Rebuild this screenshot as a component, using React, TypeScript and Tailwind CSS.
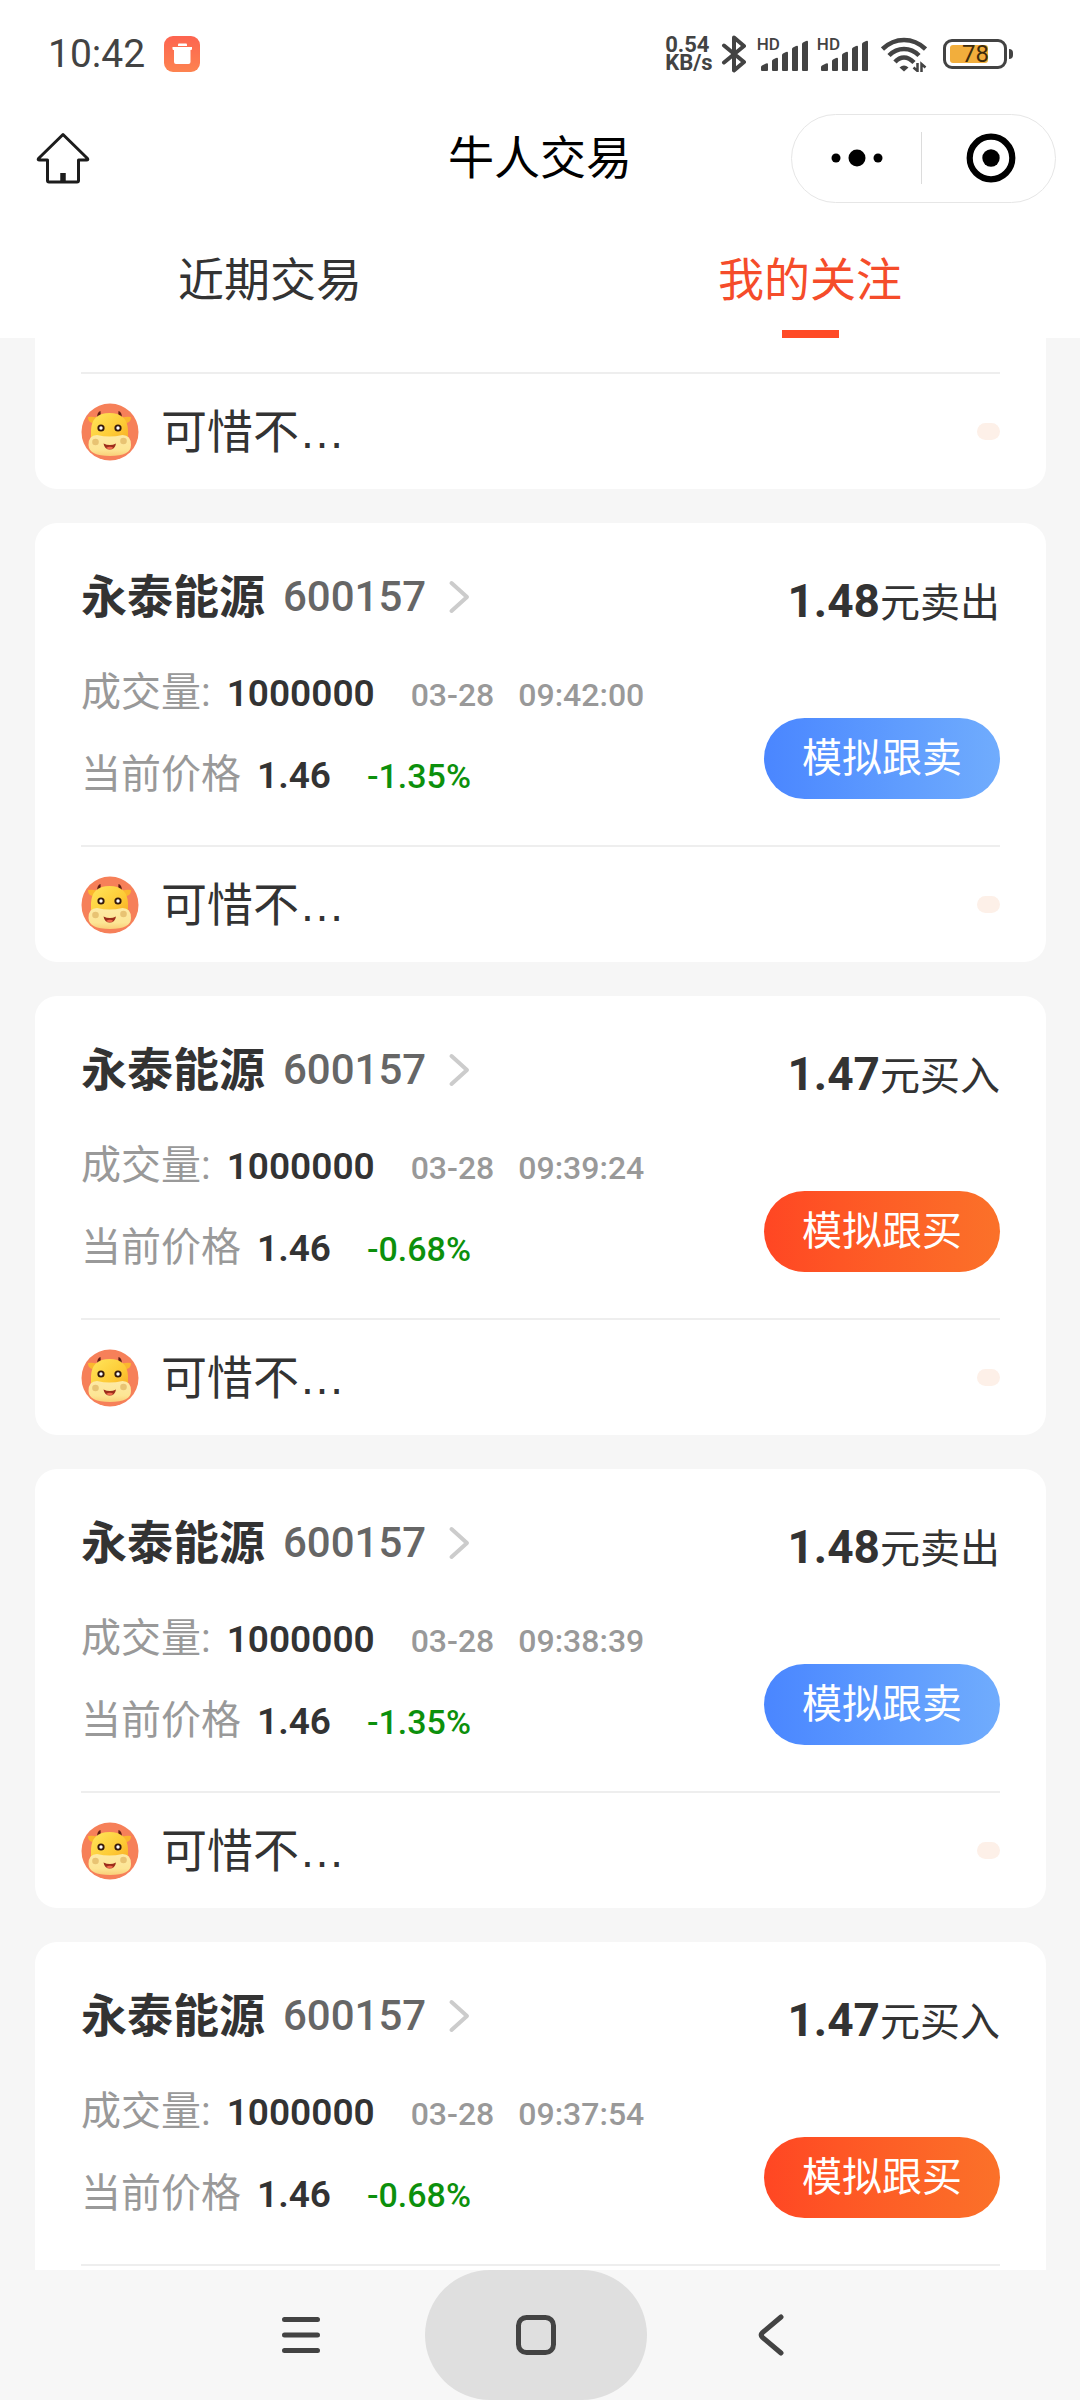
import React, { useState } from "react";

import clsx from "clsx";

type TYTrade = {
  id: number;
  name: string;
  code: string;
  action: "buy" | "sell";
  dealPrice: string;
  volume: string;
  date: string;
  time: string;
  price: string;
  change: string;
  user: string;
};

const stock = {
  name: "永泰能源",
  code: "600157",
  volume: "1000000",
  date: "03-28",
  price: "1.46",
  user: "可惜不…",
};

const trades: TYTrade[] = [
  { ...stock, id: 1, action: "sell", dealPrice: "1.48", time: "09:42:00", change: "-1.35%" },
  { ...stock, id: 2, action: "buy", dealPrice: "1.47", time: "09:39:24", change: "-0.68%" },
  { ...stock, id: 3, action: "sell", dealPrice: "1.48", time: "09:38:39", change: "-1.35%" },
  { ...stock, id: 4, action: "buy", dealPrice: "1.47", time: "09:37:54", change: "-0.68%" },
];

const Signal = () => (
  <div className="flex h-9 items-start">
    <span className="-mr-[17px] text-[17px] font-medium leading-4">HD</span>
    <svg viewBox="0 0 50 36" className="-ml-1 h-9 w-[50px]" fill="currentColor">
      <path d="M2 34v-3q0-1 1-1.500l4-2q2-1 2 1v5.500q0 1-1 1H3q-1 0-1-1z" />
      <path d="M13 34V25q0-1 1-1.500l3-1.500q2-1 2 1v11q0 1-1 1h-4q-1 0-1-1z" />
      <path d="M23 34V19q0-1 1-1.500l3-1.500q2-1 2 1v17q0 1-1 1h-4q-1 0-1-1z" />
      <path d="M33 34V13q0-1 1-1.500l3-1.500q2-1 2 1v23q0 1-1 1h-4q-1 0-1-1z" />
      <path d="M43 34V8q0-1 1-1.500l3-1.500q2-1 2 1v28q0 1-1 1h-4q-1 0-1-1z" />
    </svg>
  </div>
);

const StatusBar = () => (
  <div className="flex h-[108px] items-center justify-between pl-12 pr-[67px] text-[#434343]">
    <div className="flex items-center gap-[19px]">
      <span className="text-[39px] leading-none">10:42</span>
      <svg viewBox="0 0 36 36" className="size-9">
        <defs>
          <linearGradient id="trash" x1="0" y1="0" x2="0" y2="1">
            <stop offset="0" stopColor="#fd6450" />
            <stop offset="1" stopColor="#fd8350" />
          </linearGradient>
        </defs>
        <rect width="36" height="36" rx="9" fill="url(#trash)" />
        <path d="M14 8.500q0-1 1-1h7q1 0 1 1V10h-9z" fill="#fff" />
        <path d="M8.500 11h19.500v2q0 1-1 1h-.5v12q0 2-2 2h-12.500q-2 0-2-2V14h-.5q-1 0-1-1z" fill="#fff" />
      </svg>
    </div>

    <div className="flex items-center">
      <div className="flex flex-col text-[22px] font-bold leading-[18px]">
        <span>0.54</span>
        <span>KB/s</span>
      </div>

      <svg
        viewBox="0 0 26 38"
        className="ml-2 h-[38px] w-[26px]"
        fill="none"
        stroke="currentColor"
        strokeWidth="4"
        strokeLinecap="round"
        strokeLinejoin="round"
      >
        <path d="M3 10.500 23 27l-10 8.500V2.500L23 11 3 27.500" />
      </svg>

      <div className="ml-2.5 flex gap-2">
        <Signal />
        <Signal />
      </div>

      <svg
        viewBox="0 0 46 36"
        className="ml-3 h-9 w-[46px]"
        fill="none"
        stroke="currentColor"
        strokeWidth="4.500"
      >
        <path d="M1.500 13Q11 4 23 4t21.500 9" />
        <path d="M8 19.500Q14.500 13 23 13t15 6.500" />
        <path d="M14 26q4-4.500 9-4.500t10 5" />
        <path d="M18.500 31.500q4.500-4 9 0l-4.500 4z" fill="currentColor" stroke="none" />
        <path d="M36.500 27v8l-4-3.500M40.500 36v-8l4 3.500" strokeWidth="2.500" />
      </svg>

      <div className="ml-4 flex items-center gap-0.5">
        <div className="relative h-[30px] w-16 rounded-[9px] border-[3px] border-current">
          <div className="absolute left-1 top-[3px] h-[18px] w-[38px] rounded-[3px] bg-[#f2ae3c]" />
          <span className="absolute left-4 top-[3px] text-[24px] leading-[18px] text-[#3d2b0d]">
            78
          </span>
        </div>
        <div className="h-[10px] w-1 rounded-r-sm bg-current" />
      </div>
    </div>
  </div>
);

const NavBar = () => (
  <div className="grid h-[100px] grid-cols-3 items-center px-6">
    <a href="#home" aria-label="首页" className="w-fit pl-3">
      <svg
        viewBox="0 0 54 52"
        className="h-[52px] w-[54px]"
        fill="none"
        stroke="#1c1c1c"
        strokeWidth="3"
        strokeLinejoin="round"
      >
        <path d="M27 2.500 2.500 26.500q-1 1.500 1 1.500h8v20.500q0 1.500 1.500 1.500h28q1.500 0 1.500-1.500V28h8q2 0 1-1.500z" />
        <path d="M27 41v9" strokeWidth="5.500" />
      </svg>
    </a>

    <h1 className="text-center text-[46px] leading-[64px] text-black">牛人交易</h1>

    <div className="flex h-[89px] w-[265px] items-center justify-self-end rounded-full border border-[#e6e6e6]">
      <button type="button" aria-label="更多" className="flex flex-1 justify-center">
        <svg viewBox="0 0 54 20" className="h-5 w-[54px]">
          <circle cx="6" cy="10" r="4.500" />
          <circle cx="27" cy="10" r="8.500" />
          <circle cx="48" cy="10" r="4.500" />
        </svg>
      </button>
      <div className="h-[52px] w-px bg-[#dcdcdc]" />
      <button type="button" aria-label="关闭" className="flex flex-1 justify-center pl-1">
        <svg viewBox="0 0 50 50" className="size-[50px]">
          <circle cx="25" cy="25" r="21.300" fill="none" stroke="#000" strokeWidth="6.200" />
          <circle cx="25" cy="25" r="8.700" />
        </svg>
      </button>
    </div>
  </div>
);

const CowAvatar = () => (
  <svg viewBox="0 0 58 58" className="size-[58px]">
    <defs>
      <linearGradient id="cowHead" x1="0" y1="0" x2="1" y2="1">
        <stop offset="0" stopColor="#ffe65c" />
        <stop offset="0.600" stopColor="#fdca35" />
        <stop offset="1" stopColor="#f7a823" />
      </linearGradient>
      <linearGradient id="cowMuzzle" x1="0" y1="0" x2="0" y2="1">
        <stop offset="0" stopColor="#fdeaa6" />
        <stop offset="0.700" stopColor="#fde594" />
        <stop offset="1" stopColor="#f9cf78" />
      </linearGradient>
    </defs>
    <circle cx="29" cy="29" r="28.500" fill="#f68059" />
    <path d="M7 14q5-1 9 1l-3 5q-6 0-6-6zM50 14q-5-1-9 1l3 5q6 0 6-6z" fill="#fbb72e" />
    <path d="M16 15q0-6 3.500-7 1 3-1 7zM41 15q0-6-3.500-7-1 3 1 7z" fill="#5d1d14" />
    <path d="M10 36V27Q11 10 28.500 10T47 27v9q0 6-18.500 6T10 36z" fill="url(#cowHead)" />
    <path
      d="M7.500 42q0-10 8.500-10 6.500 1.500 12.500 1.500T41.500 32q8.500 0 8.500 10 0 11-21 11T7.500 42z"
      fill="url(#cowMuzzle)"
    />
    <circle cx="14.500" cy="39" r="3.300" fill="#e8c373" />
    <circle cx="42.500" cy="38" r="3.300" fill="#e8c373" />
    <circle cx="20" cy="25" r="3.600" fill="#34190c" />
    <circle cx="37" cy="25" r="3.600" fill="#34190c" />
    <circle cx="20" cy="25" r="1.700" fill="#fff" />
    <circle cx="37" cy="25" r="1.700" fill="#fff" />
    <path d="M22.500 40.500q6.500 3 12.500 0-1 6-6.200 6t-6.300-6z" fill="#9c2d1b" />
    <path d="M25 45q4-2.500 7.500 0-4 2.500-7.500 0z" fill="#f06a4c" />
  </svg>
);

const CardFooter = ({ user }: { user: string }) => (
  <div className="flex h-[115px] items-center justify-between">
    <div className="flex items-center gap-[22px]">
      <CowAvatar />
      <span className="font-['Liberation_Sans','Noto_Sans_CJK_SC',sans-serif] text-[46px] leading-[64px]">
        {user}
      </span>
    </div>
    <div className="h-[17px] w-[23px] rounded-full bg-[#fdf0e8]" />
  </div>
);

const TradeCard = ({ trade }: { trade: TYTrade }) => {
  const isSell = trade.action === "sell";

  return (
    <article className="rounded-[22px] bg-white px-[46px]">
      <div className="flex justify-between border-b-2 border-[#eee]">
        <div className="py-[42px]">
          <a href={`#stock-${trade.code}`} className="flex h-16 items-center">
            <h2 className="text-[46px] font-bold leading-[64px]">{trade.name}</h2>
            <span className="ml-[18px] text-[42px] font-medium leading-[64px] text-[#666]">
              {trade.code}
            </span>
            <svg
              viewBox="0 0 22 34"
              className="ml-[22px] h-[34px] w-[22px]"
              fill="none"
              stroke="#ccc"
              strokeWidth="4"
              strokeLinecap="round"
              strokeLinejoin="round"
            >
              <path d="M3.500 3 19 17 3.500 31" />
            </svg>
          </a>

          <div className="mt-9 flex h-14 items-baseline leading-[56px]">
            <span className="text-[40px] text-[#999]">成交量:</span>
            <span className="ml-4 text-[37px] font-semibold">{trade.volume}</span>
            <span className="ml-9 text-[32px] font-medium text-[#999]">{trade.date}</span>
            <span className="ml-6 text-[32px] font-medium text-[#999]">{trade.time}</span>
          </div>

          <div className="mt-[26px] flex h-14 items-baseline leading-[56px]">
            <span className="text-[40px] text-[#999]">当前价格</span>
            <span className="ml-4 text-[37px] font-semibold">{trade.price}</span>
            <span className="ml-9 text-[34px] font-medium text-[#0c900c]">{trade.change}</span>
          </div>
        </div>

        <div className="flex flex-col items-end justify-between pb-[46px] pt-[46px]">
          <p className="flex h-16 items-baseline leading-[64px]">
            <span className="text-[46px] font-bold">{trade.dealPrice}</span>
            <span className="text-[40px]">{isSell ? "元卖出" : "元买入"}</span>
          </p>

          <button
            type="button"
            className={clsx(
              "h-[81px] w-[236px] rounded-full bg-linear-to-r text-[40px] leading-[64px] text-white",
              isSell ? "from-[#4a86ff] to-[#70acfd]" : "from-[#ff4623] to-[#fb7129]"
            )}
          >
            {isSell ? "模拟跟卖" : "模拟跟买"}
          </button>
        </div>
      </div>

      <CardFooter user={trade.user} />
    </article>
  );
};

const SystemNav = () => (
  <nav className="flex h-[130px] shrink-0 items-center justify-center bg-[#f7f7f7] pr-2 text-[#434343]">
    <button type="button" aria-label="菜单" className="flex h-full w-[248px] items-center justify-center">
      <svg viewBox="0 0 40 42" className="h-[42px] w-10" stroke="currentColor" strokeWidth="5" strokeLinecap="round">
        <path d="M3.500 5.500h33M3.500 21h33M3.500 36.500h33" />
      </svg>
    </button>
    <button
      type="button"
      aria-label="主页"
      className="flex h-full w-[222px] items-center justify-center rounded-full bg-[#dfdfdf]"
    >
      <svg viewBox="0 0 42 42" className="size-[42px]" fill="none" stroke="currentColor" strokeWidth="5">
        <rect x="3.500" y="3.500" width="35" height="35" rx="8" />
      </svg>
    </button>
    <button type="button" aria-label="返回" className="flex h-full w-[248px] items-center justify-center">
      <svg
        viewBox="0 0 28 42"
        className="h-[42px] w-7"
        fill="none"
        stroke="currentColor"
        strokeWidth="5"
        strokeLinecap="round"
      >
        <path d="M24 3 5.500 18.500q-2.500 2.500 0 5L24 39" />
      </svg>
    </button>
  </nav>
);

const App = () => {
  const tabs = ["近期交易", "我的关注"];
  const [activeTab, setActiveTab] = useState<number>(1);

  return (
    <div className="flex h-screen flex-col overflow-hidden bg-[#f6f6f6] font-['Roboto','Noto_Sans_CJK_SC',sans-serif] text-[#333]">
      <header className="shrink-0 bg-white">
        <StatusBar />
        <NavBar />

        <div className="flex h-[130px]">
          {tabs.map((tab, index) => (
            <button
              key={tab}
              type="button"
              onClick={() => setActiveTab(index)}
              className={clsx(
                "flex flex-1 flex-col items-center justify-between pt-[38px] text-[46px] leading-[68px]",
                activeTab === index ? "text-[#f54c2a]" : "text-[#333]"
              )}
            >
              {tab}
              {activeTab === index && <span className="h-2 w-[57px] bg-[#ff4a26]" />}
            </button>
          ))}
        </div>
      </header>

      <main className="flex flex-1 flex-col gap-[34px] overflow-y-auto pb-[34px] pl-[35px] pr-[34px] [scrollbar-width:none]">
        <article className="rounded-b-[22px] bg-white px-[46px] pt-[34px]">
          <div className="border-t-2 border-[#eee]">
            <CardFooter user={stock.user} />
          </div>
        </article>

        {trades.map((trade) => (
          <TradeCard key={trade.id} trade={trade} />
        ))}
      </main>

      <SystemNav />
    </div>
  );
};

export default App;
